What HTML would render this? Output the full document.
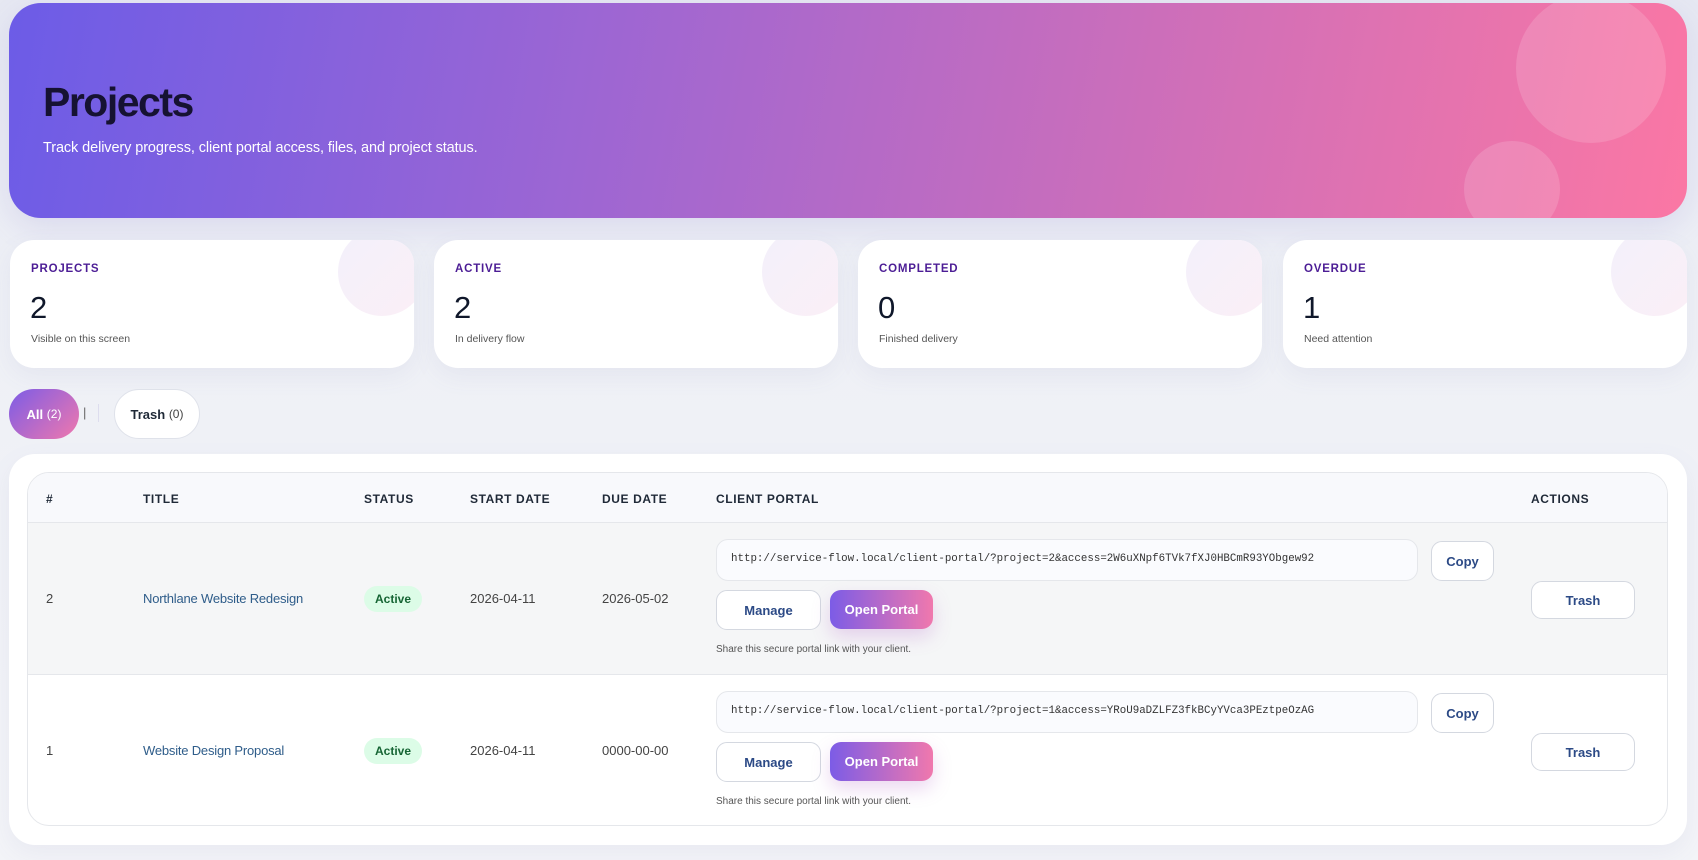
<!DOCTYPE html>
<html><head><meta charset="utf-8"><style>
*{box-sizing:border-box;margin:0;padding:0}
body{width:1698px;height:860px;overflow:hidden;background:linear-gradient(180deg,#e6e8f2 0,#eef0f6 300px,#f3f4f8 860px);font-family:"Liberation Sans",sans-serif;position:relative;color:#1f2937}
.abs{position:absolute}
.hero{left:9px;top:3px;width:1678px;height:215px;border-radius:32px;background:linear-gradient(100deg,#6c5ce7 0%,#9d66d3 35%,#d06fb8 70%,#fb77a4 100%);overflow:hidden;box-shadow:0 10px 30px rgba(120,110,200,.15)}
.hero h1{position:absolute;left:34px;top:76px;font-size:41px;font-weight:700;color:#161232;letter-spacing:-1.5px}
.hero p{position:absolute;left:34px;top:137px;font-size:14.5px;color:#fff;letter-spacing:-0.1px}
.circ{position:absolute;border-radius:50%;background:rgba(255,255,255,.15)}
.card{top:240px;width:404px;height:128px;background:#fff;border-radius:24px;overflow:hidden;box-shadow:0 8px 24px rgba(120,120,170,.08)}
.card .d{position:absolute;right:-12px;top:-12px;width:88px;height:88px;border-radius:50%;background:linear-gradient(135deg,#f3f0fb,#fbeff6)}
.card .l{position:absolute;left:21px;top:23px;font-size:11.5px;font-weight:700;color:#4c1d95;letter-spacing:0.8px}
.card .n{position:absolute;left:20px;top:50px;font-size:31px;color:#0f172a}
.card .s{position:absolute;left:21px;top:93px;font-size:10.5px;color:#555}
.pill{top:389px;height:50px;border-radius:25px;font-size:13px;display:flex;align-items:center;justify-content:center}
.panel{left:9px;top:454px;width:1678px;height:391px;background:#fff;border-radius:26px;box-shadow:0 8px 24px rgba(120,120,170,.08)}
.tbl{left:27px;top:472px;width:1641px;height:354px;border:1px solid #e5e7eb;border-radius:22px;overflow:hidden}
.hd{position:absolute;left:0;top:0;width:100%;height:50px;background:#f8f9fc;border-bottom:1px solid #e5e7eb}
.th{position:absolute;top:19px;font-size:12px;font-weight:700;letter-spacing:0.6px;color:#1f2937}
.row{position:absolute;left:0;width:100%;height:152px}
.td{position:absolute;font-size:13px;color:#444}
.ttl{color:#2f5d8a;font-size:13px;letter-spacing:-0.2px}
.badge{position:absolute;width:58px;height:26px;border-radius:13px;background:#dcfce7;color:#166534;font-size:12px;font-weight:700;display:flex;align-items:center;justify-content:center}
.url{position:absolute;left:688px;width:702px;height:42px;border:1px solid #e5e7eb;border-radius:12px;background:#fafbfe;font-family:"Liberation Mono",monospace;font-size:10.8px;color:#333;padding:13px 0 0 14px}
.btn{position:absolute;border:1px solid #d4d8e0;border-radius:11px;background:#fff;color:#2c4a86;font-size:13px;font-weight:700;display:flex;align-items:center;justify-content:center}
.op{position:absolute;border-radius:11px;background:linear-gradient(90deg,#7c5ce6,#f078ad);color:#fff;font-size:13px;font-weight:700;display:flex;align-items:center;justify-content:center;box-shadow:0 8px 18px rgba(180,100,200,.25)}
.hint{position:absolute;left:688px;font-size:10px;color:#555}
</style></head><body>
<div class="abs hero">
<div class="circ" style="left:1507px;top:-10px;width:150px;height:150px"></div>
<div class="circ" style="left:1455px;top:138px;width:96px;height:96px"></div>
<h1>Projects</h1>
<p>Track delivery progress, client portal access, files, and project status.</p>
</div>
<div class="abs card" style="left:10px"><div class="d"></div><div class="l">PROJECTS</div><div class="n">2</div><div class="s">Visible on this screen</div></div>
<div class="abs card" style="left:434px"><div class="d"></div><div class="l">ACTIVE</div><div class="n">2</div><div class="s">In delivery flow</div></div>
<div class="abs card" style="left:858px"><div class="d"></div><div class="l">COMPLETED</div><div class="n">0</div><div class="s">Finished delivery</div></div>
<div class="abs card" style="left:1283px"><div class="d"></div><div class="l">OVERDUE</div><div class="n">1</div><div class="s">Need attention</div></div>
<div class="abs pill" style="left:9px;width:70px;background:linear-gradient(135deg,#7c5ce6,#f078ad);color:#fff"><b>All</b>&nbsp;<span style="font-size:12px">(2)</span></div>
<div class="abs" style="left:83px;top:405px;font-size:13px;color:#666">|</div>
<div class="abs" style="left:98px;top:404px;width:1px;height:18px;background:#dde"></div>
<div class="abs pill" style="left:114px;width:86px;background:#fff;border:1px solid #dfe2ea;color:#1f2937"><b>Trash</b>&nbsp;<span style="font-size:12px;color:#444">(0)</span></div>
<div class="abs panel"></div>
<div class="abs tbl">
<div class="hd">
<div class="th" style="left:18px">#</div><div class="th" style="left:115px">TITLE</div><div class="th" style="left:336px">STATUS</div><div class="th" style="left:442px">START DATE</div><div class="th" style="left:574px">DUE DATE</div><div class="th" style="left:688px">CLIENT PORTAL</div><div class="th" style="left:1503px">ACTIONS</div>
</div>
<div class="row" style="top:50px;background:#f5f6f7;border-bottom:1px solid #e5e7eb">
<div class="td" style="left:18px;top:68px">2</div><div class="td ttl" style="left:115px;top:68px">Northlane Website Redesign</div>
<div class="badge" style="left:336px;top:63px">Active</div>
<div class="td" style="left:442px;top:68px">2026-04-11</div><div class="td" style="left:574px;top:68px">2026-05-02</div>
<div class="url" style="top:16px">http://service-flow.local/client-portal/?project=2&amp;access=2W6uXNpf6TVk7fXJ0HBCmR93YObgew92</div>
<div class="btn" style="left:1403px;top:18px;width:63px;height:40px">Copy</div>
<div class="btn" style="left:688px;top:67px;width:105px;height:40px">Manage</div>
<div class="op" style="left:802px;top:67px;width:103px;height:39px">Open Portal</div>
<div class="hint" style="left:688px;top:121px">Share this secure portal link with your client.</div>
<div class="btn" style="left:1503px;top:58px;width:104px;height:38px">Trash</div>
</div>
<div class="row" style="top:202px">
<div class="td" style="left:18px;top:68px">1</div><div class="td ttl" style="left:115px;top:68px">Website Design Proposal</div>
<div class="badge" style="left:336px;top:63px">Active</div>
<div class="td" style="left:442px;top:68px">2026-04-11</div><div class="td" style="left:574px;top:68px">0000-00-00</div>
<div class="url" style="top:16px">http://service-flow.local/client-portal/?project=1&amp;access=YRoU9aDZLFZ3fkBCyYVca3PEztpeOzAG</div>
<div class="btn" style="left:1403px;top:18px;width:63px;height:40px">Copy</div>
<div class="btn" style="left:688px;top:67px;width:105px;height:40px">Manage</div>
<div class="op" style="left:802px;top:67px;width:103px;height:39px">Open Portal</div>
<div class="hint" style="left:688px;top:121px">Share this secure portal link with your client.</div>
<div class="btn" style="left:1503px;top:58px;width:104px;height:38px">Trash</div>
</div>
</div>
</body></html>
